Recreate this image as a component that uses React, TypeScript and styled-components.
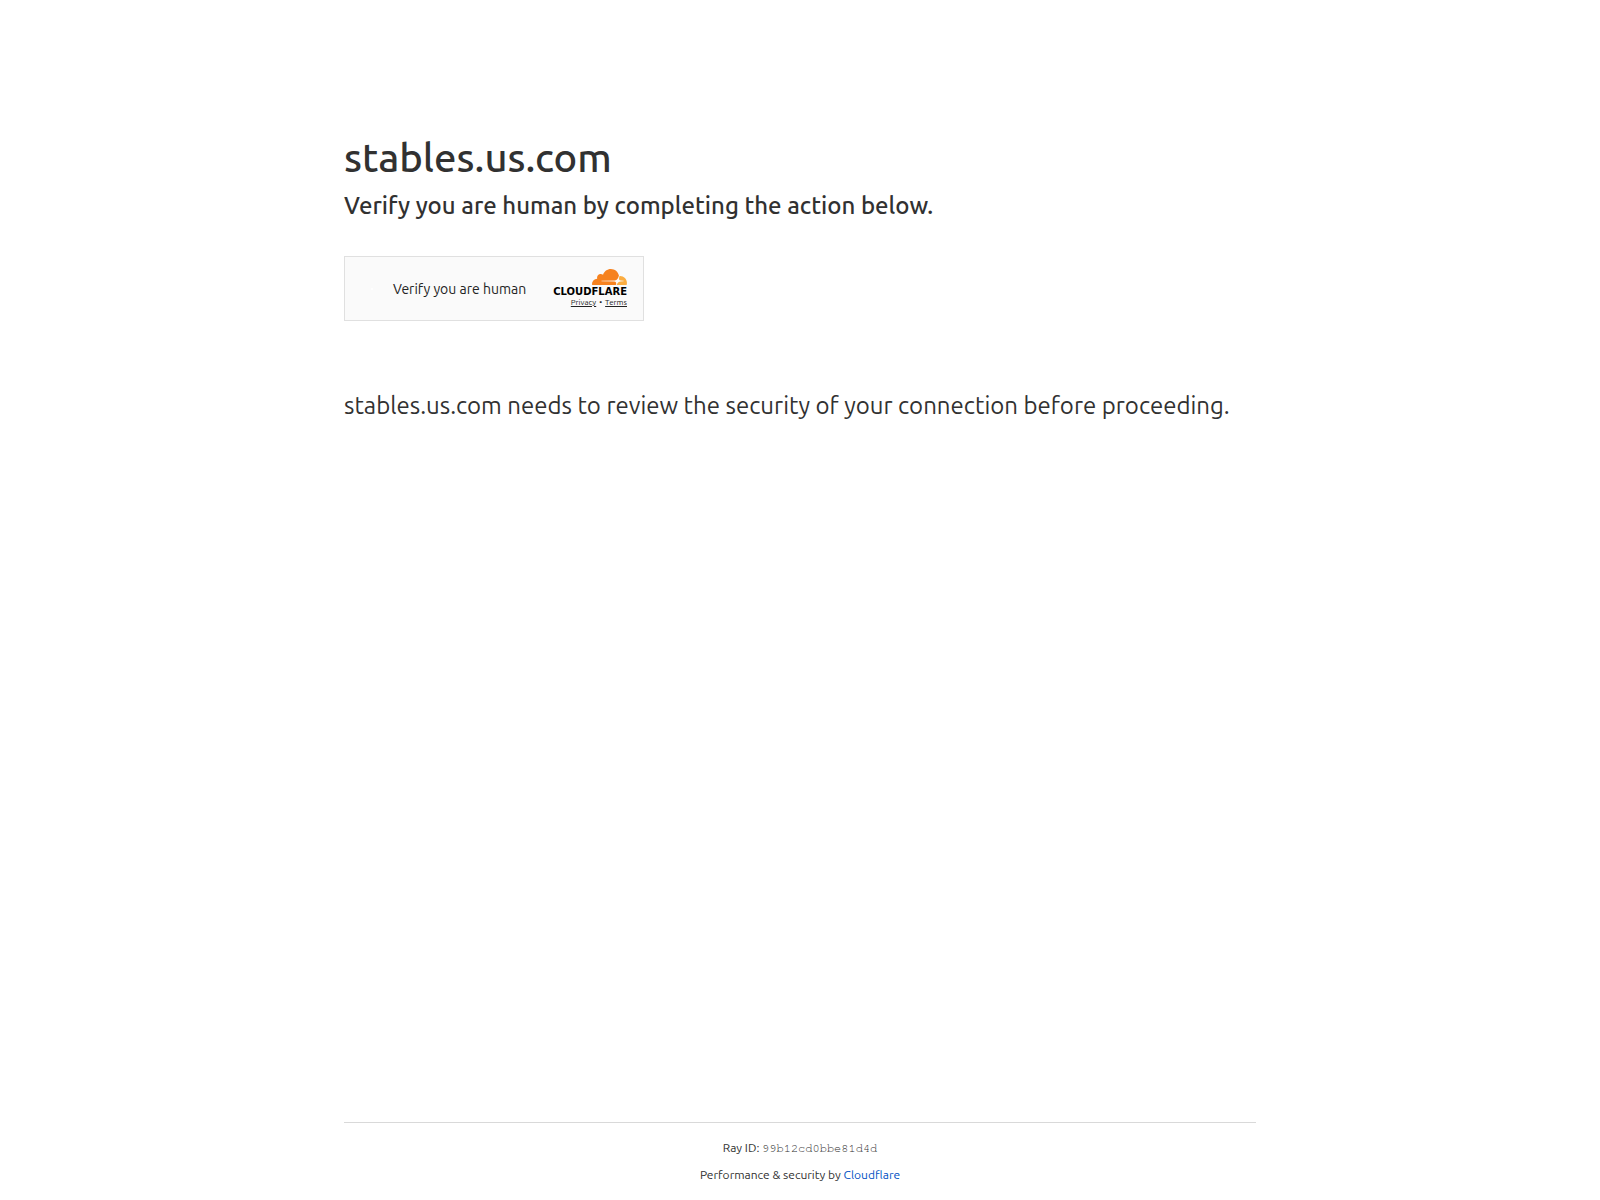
import React from "react";
import styled, { createGlobalStyle } from "styled-components";

const GlobalStyle = createGlobalStyle`
  * {
    box-sizing: border-box;
    margin: 0;
    padding: 0;
  }

  body {
    background: #ffffff;
    color: #313131;
    font-family: Ubuntu, "Noto Sans", "Open Sans", sans-serif;
  }
`;

const Page = styled.div`
  display: flex;
  flex-direction: column;
  min-height: 100vh;
`;

const Main = styled.main`
  flex: 1;
  width: 100%;
  max-width: 960px;
  margin: 0 auto;
  padding: 128px 24px 0;
`;

const SiteName = styled.h1`
  font-size: 40px;
  font-weight: 500;
  line-height: 60px;
`;

const Prompt = styled.h2`
  font-size: 24px;
  font-weight: 500;
  line-height: 36px;
`;

const Widget = styled.section`
  display: flex;
  align-items: center;
  justify-content: space-between;
  width: 300px;
  height: 65px;
  margin: 32px 0 67px;
  padding: 0 16px 0 26px;
  border: 1px solid #e0e0e0;
  background: #fafafa;
`;

const Status = styled.div`
  display: flex;
  align-items: center;
  gap: 20px;
  font-size: 14px;
  line-height: 20px;
  color: #232323;
`;

const SpinnerDot = styled.span`
  width: 2px;
  height: 2px;
  border-radius: 50%;
  background: #ffffff;
`;

const Brand = styled.div`
  display: flex;
  flex-direction: column;
  align-items: flex-end;
`;

const Cloud = styled.svg`
  display: block;
  width: 35px;
  height: 16px;
`;

const Wordmark = styled.span`
  font-family: "DejaVu Sans", sans-serif;
  font-size: 10px;
  font-weight: 700;
  line-height: 13px;
  color: #000000;
`;

const Legal = styled.nav`
  display: flex;
  gap: 3px;
  font-size: 8px;
  line-height: 10px;
  color: #232323;
`;

const LegalLink = styled.a`
  color: inherit;
  text-decoration: underline;
`;

const Explanation = styled.p`
  font-size: 24px;
  line-height: 36px;
`;

const Footer = styled.footer`
  width: 100%;
  max-width: 960px;
  margin: 0 auto;
  padding: 0 24px;
`;

const FooterInner = styled.div`
  display: flex;
  flex-direction: column;
  gap: 9px;
  padding: 16px 0;
  border-top: 1px solid #d9d9d9;
  font-size: 12px;
  line-height: 18px;
  text-align: center;
`;

const RayCode = styled.code`
  font-family: "Nimbus Mono PS", "Nimbus Mono L", FreeMono, "Courier 10 Pitch", "Liberation Mono", monospace;
`;

const FooterLink = styled.a`
  color: #0051c3;
  text-decoration: none;
`;

function CloudLogo() {
  return (
    <Cloud viewBox="38 0 35 16" aria-hidden="true">
      <path
        fill="#f6821f"
        d="M61.8848 15.7841L62.0632 15.1578C62.2758 14.4126 62.1967 13.7239 61.8401 13.2178C61.5118 12.7517 60.9649 12.4773 60.3007 12.4453L47.7201 12.2836C47.6811 12.2829 47.6428 12.2728 47.6083 12.2542C47.5738 12.2356 47.5442 12.209 47.5217 12.1766C47.4996 12.1431 47.4856 12.1049 47.4807 12.0649C47.4758 12.025 47.4801 11.9844 47.4933 11.9465C47.5149 11.8839 47.5541 11.8291 47.6061 11.7888C47.658 11.7486 47.7204 11.7247 47.7856 11.7202L60.4827 11.5566C61.9889 11.4864 63.6196 10.2462 64.1905 8.73372L64.9146 6.81361C64.9443 6.73242 64.951 6.64444 64.9341 6.55957C64.112 2.80652 60.8115 0 56.8652 0C53.2293 0 50.1421 2.38158 49.0347 5.69186C48.2864 5.12186 47.3535 4.85982 46.4228 4.95823C44.6785 5.13401 43.276 6.55928 43.1034 8.32979C43.059 8.77189 43.0915 9.21845 43.1992 9.64918C40.3497 9.73347 38.0645 12.1027 38.0645 15.0151C38.0649 15.2751 38.0838 15.5347 38.1212 15.7919C38.1294 15.8513 38.1584 15.9057 38.2029 15.9452C38.2474 15.9847 38.3044 16.0067 38.3635 16.0071L61.5894 16.0099C61.6616 16.0088 61.7252 15.9862 61.7772 15.9455C61.8293 15.9048 61.8671 15.8481 61.8848 15.7841Z"
      />
      <path
        fill="#fbad41"
        d="M66.0758 6.95285C65.9592 6.95285 65.843 6.95582 65.7274 6.96177C65.7087 6.96312 65.6904 6.96719 65.6729 6.97385C65.6426 6.98437 65.6152 7.00219 65.5931 7.02579C65.5711 7.04939 65.555 7.07806 65.5462 7.10936L65.0515 8.84333C64.8389 9.58847 64.918 10.2766 65.2749 10.7827C65.6029 11.2494 66.1498 11.5233 66.814 11.5552L69.4959 11.7186C69.5336 11.7199 69.5705 11.73 69.6037 11.7483C69.6369 11.7666 69.6654 11.7925 69.687 11.8239C69.7092 11.8576 69.7234 11.896 69.7283 11.9363C69.7332 11.9765 69.7288 12.0173 69.7153 12.0555C69.6937 12.118 69.6546 12.1727 69.6028 12.2129C69.5509 12.2531 69.4887 12.2771 69.4236 12.2819L66.6371 12.4453C65.1241 12.5161 63.4937 13.7558 62.9233 15.2682L62.722 15.8022C62.7136 15.8245 62.7105 15.8486 62.713 15.8724C62.7155 15.8961 62.7236 15.9189 62.7365 15.9389C62.7494 15.9589 62.7668 15.9755 62.7871 15.9874C62.8074 15.9993 62.8302 16.0061 62.8536 16.0073H72.4502C72.506 16.0073 72.5602 15.9889 72.6046 15.9549C72.649 15.9209 72.6813 15.8731 72.6964 15.8187C72.8684 15.1936 72.9553 14.5476 72.9545 13.8984C72.9517 10.0621 69.8719 6.95285 66.0758 6.95285Z"
      />
    </Cloud>
  );
}

export default function App() {
  return (
    <Page>
      <GlobalStyle />
      <Main>
        <SiteName>stables.us.com</SiteName>
        <Prompt>Verify you are human by completing the action below.</Prompt>
        <Widget>
          <Status role="status">
            <SpinnerDot />
            Verify you are human
          </Status>
          <Brand>
            <CloudLogo />
            <Wordmark>CLOUDFLARE</Wordmark>
            <Legal>
              <LegalLink href="#privacy">Privacy</LegalLink>
              <span>•</span>
              <LegalLink href="#terms">Terms</LegalLink>
            </Legal>
          </Brand>
        </Widget>
        <Explanation>
          stables.us.com needs to review the security of your connection before proceeding.
        </Explanation>
      </Main>
      <Footer>
        <FooterInner>
          <div>
            Ray ID: <RayCode>99b12cd0bbe81d4d</RayCode>
          </div>
          <div>
            Performance &amp; security by <FooterLink href="#cloudflare">Cloudflare</FooterLink>
          </div>
        </FooterInner>
      </Footer>
    </Page>
  );
}
